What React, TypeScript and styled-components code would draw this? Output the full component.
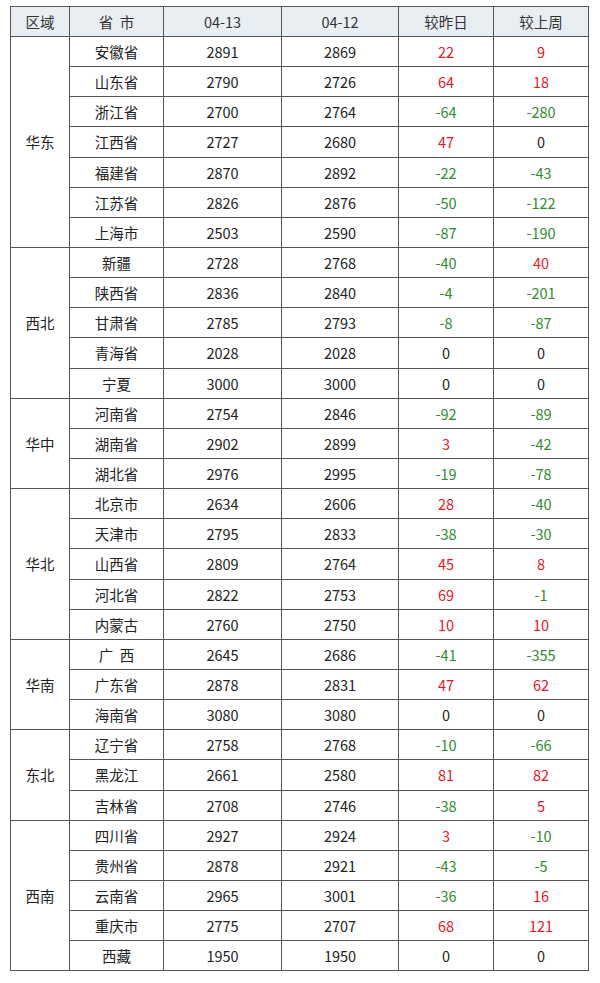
import React from "react";
import styled, { createGlobalStyle } from "styled-components";

const GlobalStyle = createGlobalStyle`
  html, body { margin: 0; padding: 0; background: #ffffff; }
  body { font-family: "Noto Sans CJK SC", "Noto Sans", sans-serif; }
`;

const Page = styled.div`
  padding: 6px 0 0 10px;
`;

const Table = styled.table`
  border-collapse: collapse;
  table-layout: fixed;
  width: 578px;
  font-family: "Noto Sans CJK SC", "Noto Sans", sans-serif;
  font-size: 14.5px;
  color: #333333;
  border: 1px solid #555555;
`;

const HeadCell = styled.th`
  height: 29px;
  padding: 0;
  font-weight: normal;
  background: #e9eef3;
  border: 1px solid #555555;
  text-align: center;
  vertical-align: middle;
`;

const Row = styled.tr`
  height: 30.15px;
`;

const Cell = styled.td<{ $tone?: "up" | "down" | "flat" }>`
  padding: 0;
  border: 1px solid #555555;
  text-align: center;
  vertical-align: middle;
  color: ${(p) =>
    p.$tone === "up" ? "#e8161f" : p.$tone === "down" ? "#2e8b2e" : "#222222"};
`;

type Item = [string, number, number, number, number];
type Group = { region: string; items: Item[] };

const data: Group[] = [
  {
    region: "华东",
    items: [
      ["安徽省", 2891, 2869, 22, 9],
      ["山东省", 2790, 2726, 64, 18],
      ["浙江省", 2700, 2764, -64, -280],
      ["江西省", 2727, 2680, 47, 0],
      ["福建省", 2870, 2892, -22, -43],
      ["江苏省", 2826, 2876, -50, -122],
      ["上海市", 2503, 2590, -87, -190],
    ],
  },
  {
    region: "西北",
    items: [
      ["新疆", 2728, 2768, -40, 40],
      ["陕西省", 2836, 2840, -4, -201],
      ["甘肃省", 2785, 2793, -8, -87],
      ["青海省", 2028, 2028, 0, 0],
      ["宁夏", 3000, 3000, 0, 0],
    ],
  },
  {
    region: "华中",
    items: [
      ["河南省", 2754, 2846, -92, -89],
      ["湖南省", 2902, 2899, 3, -42],
      ["湖北省", 2976, 2995, -19, -78],
    ],
  },
  {
    region: "华北",
    items: [
      ["北京市", 2634, 2606, 28, -40],
      ["天津市", 2795, 2833, -38, -30],
      ["山西省", 2809, 2764, 45, 8],
      ["河北省", 2822, 2753, 69, -1],
      ["内蒙古", 2760, 2750, 10, 10],
    ],
  },
  {
    region: "华南",
    items: [
      ["广\u00a0\u00a0西", 2645, 2686, -41, -355],
      ["广东省", 2878, 2831, 47, 62],
      ["海南省", 3080, 3080, 0, 0],
    ],
  },
  {
    region: "东北",
    items: [
      ["辽宁省", 2758, 2768, -10, -66],
      ["黑龙江", 2661, 2580, 81, 82],
      ["吉林省", 2708, 2746, -38, 5],
    ],
  },
  {
    region: "西南",
    items: [
      ["四川省", 2927, 2924, 3, -10],
      ["贵州省", 2878, 2921, -43, -5],
      ["云南省", 2965, 3001, -36, 16],
      ["重庆市", 2775, 2707, 68, 121],
      ["西藏", 1950, 1950, 0, 0],
    ],
  },
];

const tone = (n: number): "up" | "down" | "flat" =>
  n > 0 ? "up" : n < 0 ? "down" : "flat";

export default function App() {
  return (
    <Page>
      <GlobalStyle />
      <Table>
        <colgroup>
          <col style={{ width: 59 }} />
          <col style={{ width: 94 }} />
          <col style={{ width: 118 }} />
          <col style={{ width: 117 }} />
          <col style={{ width: 95 }} />
          <col style={{ width: 95 }} />
        </colgroup>
        <thead>
          <tr>
            <HeadCell>区域</HeadCell>
            <HeadCell>省&nbsp;&nbsp;市</HeadCell>
            <HeadCell>04-13</HeadCell>
            <HeadCell>04-12</HeadCell>
            <HeadCell>较昨日</HeadCell>
            <HeadCell>较上周</HeadCell>
          </tr>
        </thead>
        <tbody>
          {data.map((g) =>
            g.items.map((it, i) => (
              <Row key={g.region + it[0]}>
                {i === 0 && <Cell rowSpan={g.items.length}>{g.region}</Cell>}
                <Cell>{it[0]}</Cell>
                <Cell>{it[1]}</Cell>
                <Cell>{it[2]}</Cell>
                <Cell $tone={tone(it[3])}>{it[3]}</Cell>
                <Cell $tone={tone(it[4])}>{it[4]}</Cell>
              </Row>
            ))
          )}
        </tbody>
      </Table>
    </Page>
  );
}
